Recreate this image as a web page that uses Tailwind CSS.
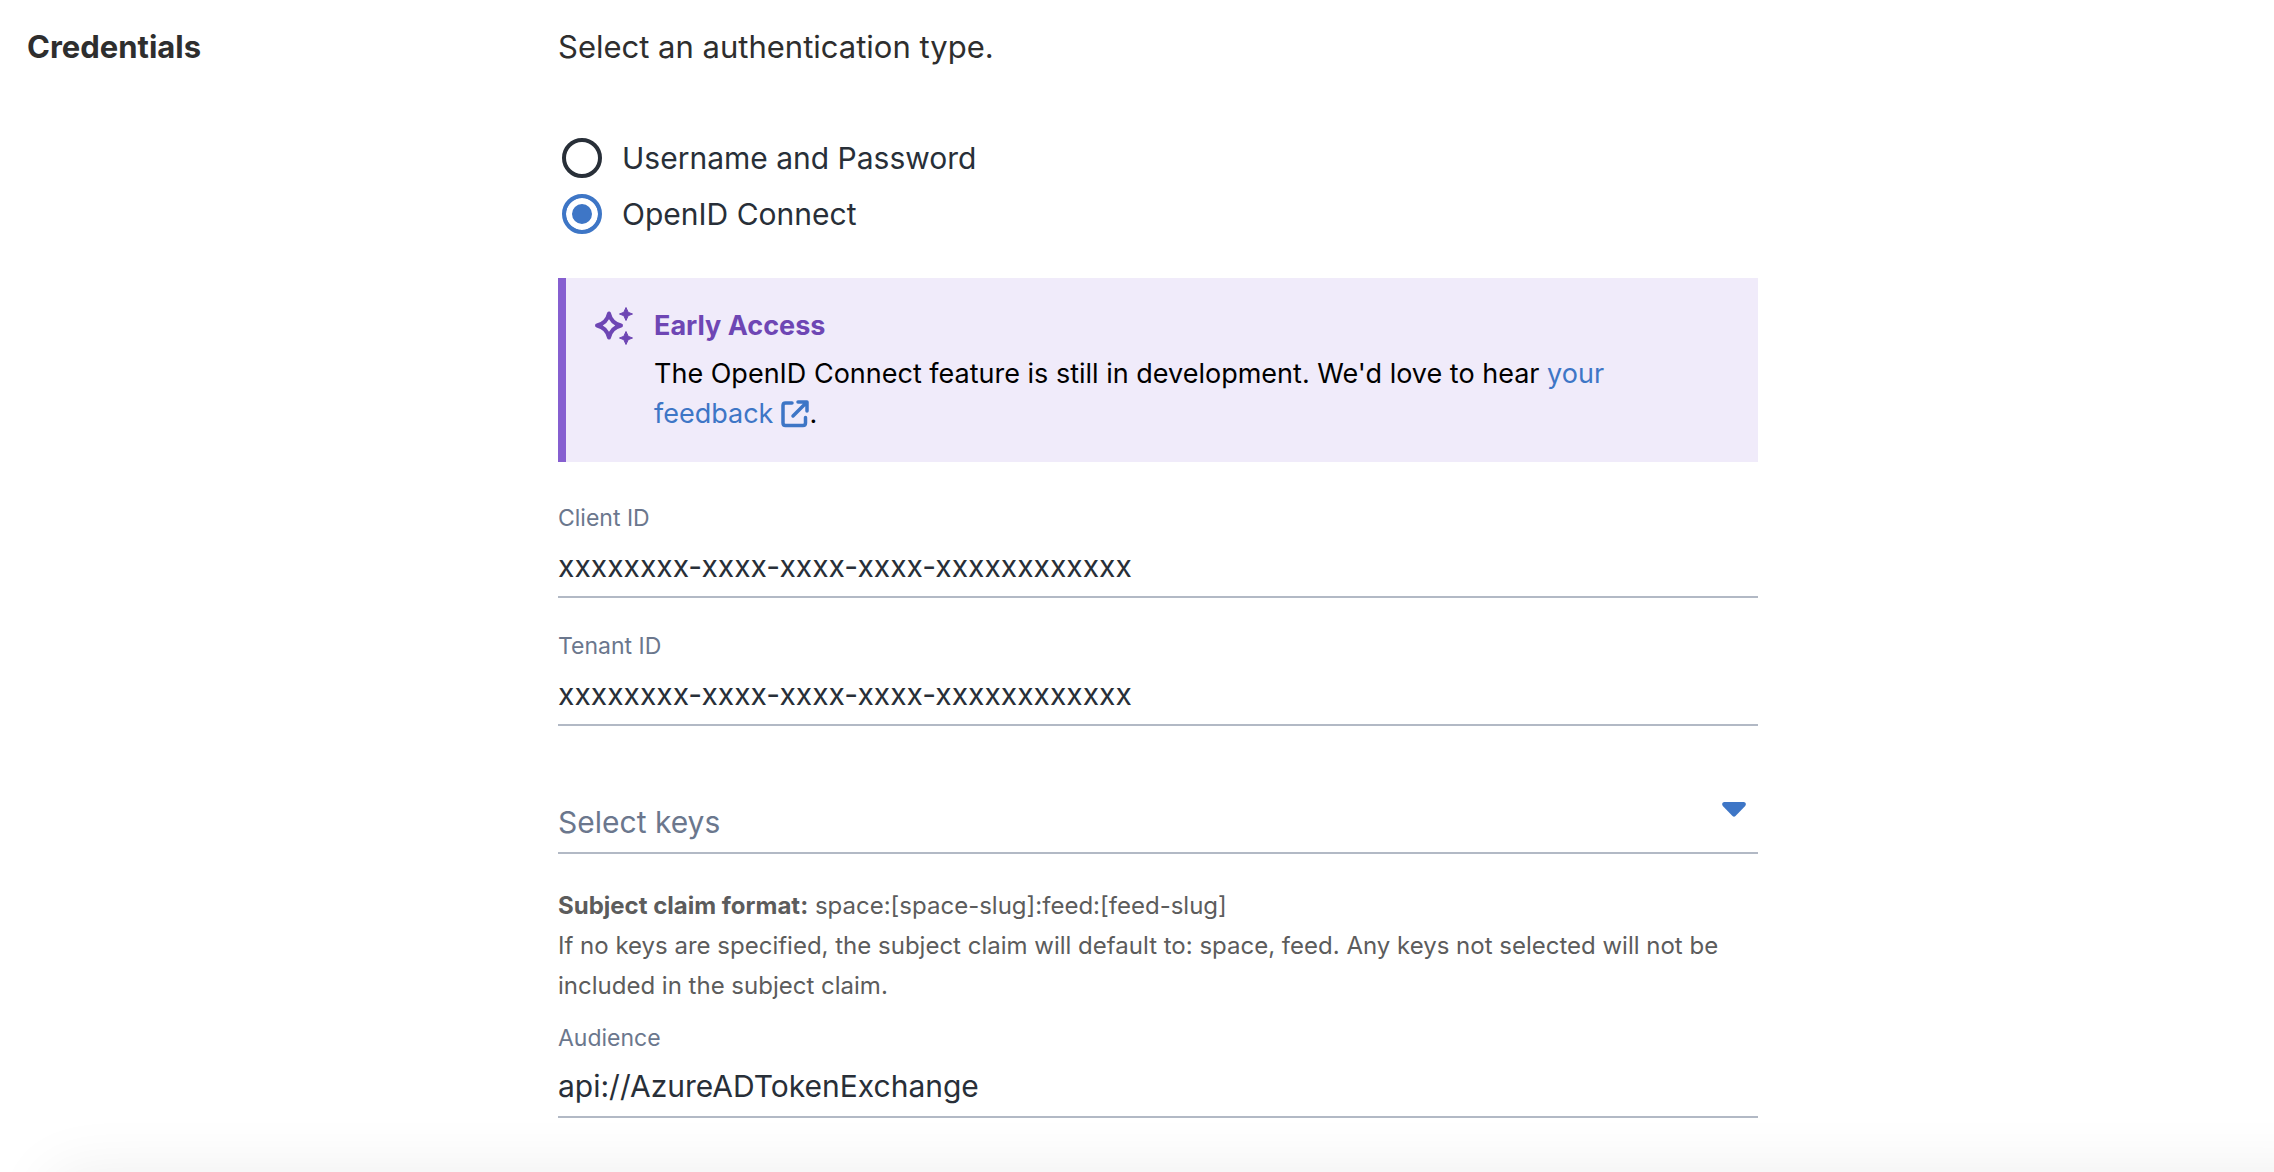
<!DOCTYPE html>
<html lang="en">
<head>
<meta charset="utf-8">
<meta name="viewport" content="width=device-width, initial-scale=1">
<title>Credentials</title>
<script src="https://cdn.jsdelivr.net/npm/@tailwindcss/browser@4"></script>
</head>
<body class="bg-white font-['Inter',sans-serif] text-[30px] leading-10 text-[#282f38]">
<main class="grid gap-y-6 px-[27px] pt-[27px] lg:grid-cols-[531px_minmax(0,1200px)]">
  <h2 id="section-title" class="text-[31px] font-bold text-[#2e2e2e]">Credentials</h2>

  <form aria-labelledby="section-title">
    <fieldset>
      <legend class="text-[31px] text-[#2e2e2e]">Select an authentication type.</legend>
      <div class="mt-[71px] ml-1 flex flex-col gap-4">
        <label class="flex items-center gap-5">
          <input type="radio" name="auth" value="password" class="size-10 shrink-0 appearance-none rounded-full border-4 border-[#282f38] checked:border-[#3e76c6] checked:bg-[#3e76c6] checked:shadow-[inset_0_0_0_6px_white]">
          Username and Password
        </label>
        <label class="flex items-center gap-5">
          <input type="radio" name="auth" value="oidc" checked class="size-10 shrink-0 appearance-none rounded-full border-4 border-[#282f38] checked:border-[#3e76c6] checked:bg-[#3e76c6] checked:shadow-[inset_0_0_0_6px_white]">
          OpenID Connect
        </label>
      </div>
    </fieldset>

    <aside class="mt-11 flex gap-5 border-l-8 border-[#865fd0] bg-[#f0ebfa] px-7 py-7 text-[27px] text-black">
      <svg class="size-10 shrink-0 text-[#6e46b4]" viewBox="0 0 40 40" fill="currentColor" aria-hidden="true">
        <path fill="none" stroke="currentColor" stroke-width="4" stroke-linejoin="round" d="M15 7.500Q17.200 17.300 27 19.500Q17.200 21.700 15 31.500Q12.800 21.700 3 19.500Q12.800 17.300 15 7.500Z"/>
        <path stroke="currentColor" stroke-width="1" stroke-linejoin="round" d="M32 1.500L34.200 6.300L38.500 8L34.200 9.700L32 14.500L29.800 9.700L25.500 8L29.800 6.300Z"/>
        <path stroke="currentColor" stroke-width="1" stroke-linejoin="round" d="M32 25.500L34.200 30.300L38.500 32L34.200 33.700L32 38.500L29.800 33.700L25.500 32L29.800 30.300Z"/>
      </svg>
      <div>
        <h3 class="mb-2 font-bold text-[#6e46b4]">Early Access</h3>
        <p>The OpenID Connect feature is still in development. We'd love to hear <a href="#feedback" class="text-[#3e76c6]">your feedback<svg class="mb-1 ml-2 inline size-7" viewBox="0 0 28 28" fill="none" stroke="currentColor" stroke-width="3.500" stroke-linecap="round" stroke-linejoin="round" aria-hidden="true"><path d="M11 3H4.500Q2 3 2 5.500V23Q2 25.500 4.500 25.500H22Q24.500 25.500 24.500 23V17.500"/><path d="M12 16L25 3M17 2H26V11"/></svg></a>.</p>
      </div>
    </aside>

    <div class="mt-10">
      <label for="client" class="block text-[23px] leading-8 text-[#6b778d]">Client ID</label>
      <input id="client" type="text" value="xxxxxxxx-xxxx-xxxx-xxxx-xxxxxxxxxxxx" class="mt-3 block w-full border-b-2 border-[#b2b9c5] pb-[10px] outline-none">
    </div>
    <div class="mt-8">
      <label for="tenant" class="block text-[23px] leading-8 text-[#6b778d]">Tenant ID</label>
      <input id="tenant" type="text" value="xxxxxxxx-xxxx-xxxx-xxxx-xxxxxxxxxxxx" class="mt-3 block w-full border-b-2 border-[#b2b9c5] pb-[10px] outline-none">
    </div>

    <div class="relative mt-[76px]">
      <select aria-label="Select keys" class="block w-full appearance-none border-b-2 border-[#b2b9c5] pb-[10px] text-[#6b778d] outline-none">
        <option>Select keys</option>
      </select>
      <svg class="pointer-events-none absolute top-0 right-3 h-4 w-6 text-[#3e76c6]" viewBox="0 0 24 16" fill="currentColor" aria-hidden="true"><path d="M2 0H22Q25 1 23.200 4L13.500 14Q12 15.500 10.500 14L.8 4Q-1 1 2 0Z"/></svg>
    </div>

    <p class="mt-8 text-[24px] text-[#5c5c5c]"><strong class="font-bold">Subject claim format:</strong> space:[space-slug]:feed:[feed-slug]<br>If no keys are specified, the subject claim will default to: space, feed. Any keys not selected will not be included in the subject claim.</p>

    <div class="mt-4">
      <label for="audience" class="block text-[23px] leading-8 text-[#6b778d]">Audience</label>
      <input id="audience" type="text" value="api://AzureADTokenExchange" class="mt-3 block w-full border-b-2 border-[#b2b9c5] pb-[10px] outline-none">
    </div>
  </form>
</main>

<!-- soft shadow cast upwards by the panel below the fold -->
<div aria-hidden="true" class="pointer-events-none fixed inset-x-0 bottom-0 h-16 overflow-hidden pt-16">
  <div class="-mr-20 ml-12 h-40 rounded-3xl shadow-[0_0_64px_rgba(0,0,0,0.07)]"></div>
</div>
</body>
</html>
